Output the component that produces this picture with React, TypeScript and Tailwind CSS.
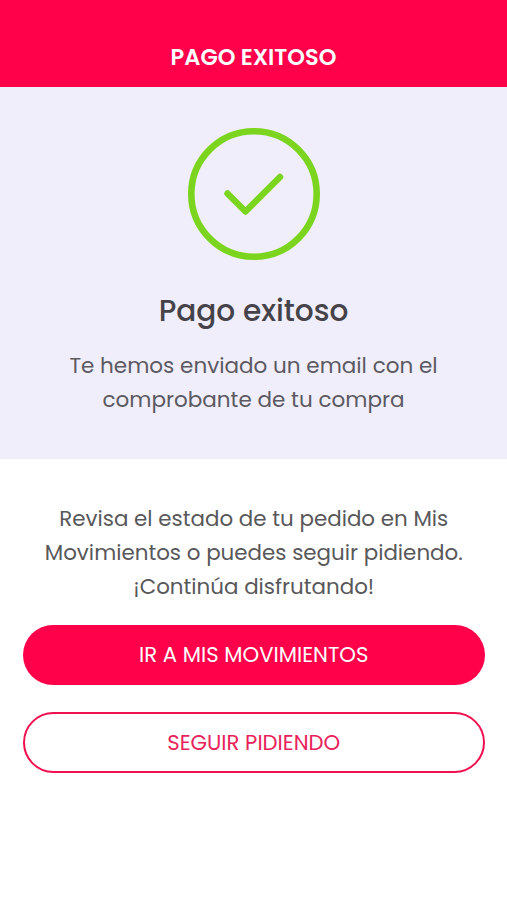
export default function App() {
  return (
    <main className="flex h-[900px] w-full flex-col overflow-hidden bg-white text-center font-['Poppins','Inter',sans-serif] whitespace-nowrap">
      <header className="flex h-[87px] shrink-0 items-end justify-center bg-[#ff004b] pb-[14px]">
        <h1 className="text-[22.5px] leading-8 font-semibold text-white">PAGO EXITOSO</h1>
      </header>

      <section className="flex h-[372px] shrink-0 flex-col items-center bg-[#f0eefa] pt-[41px]">
        <svg width="132" height="132" viewBox="0 0 132 132" fill="none" stroke="#7bd51f">
          <circle cx="66" cy="66" r="62.7" strokeWidth="6.6" />
          <path d="M39.5 65.5 57.5 83.5 92 49" strokeWidth="6.4" strokeLinecap="round" strokeLinejoin="round" />
        </svg>
        <h2 className="mt-[31px] text-[29.6px] leading-10 font-medium text-[#454349]">Pago exitoso</h2>
        <p className="mt-[18px] text-[21.5px] leading-[33.6px] text-[#5b5961]">
          <span className="block">Te hemos enviado un email con el</span>
          <span className="block">comprobante de tu compra</span>
        </p>
      </section>

      <section className="flex flex-col pr-[22px] pl-[22.5px] pt-[43px]">
        <p className="text-[21.4px] leading-[33.8px] text-[#58585a]">
          <span className="block">Revisa el estado de tu pedido en Mis</span>
          <span className="block">Movimientos o puedes seguir pidiendo.</span>
          <span className="block">¡Continúa disfrutando!</span>
        </p>
        <button className="mt-[21.6px] flex h-[60px] items-center justify-center rounded-full bg-[#ff004b] text-[21.2px] text-white">
          <span>IR A MIS MOVIMIENTOS</span>
        </button>
        <button className="mt-[27px] flex h-[61px] items-center justify-center rounded-full border-2 border-[#f0104f] text-[21.2px] text-[#e8235a]">
          <span>SEGUIR PIDIENDO</span>
        </button>
      </section>
    </main>
  );
}
